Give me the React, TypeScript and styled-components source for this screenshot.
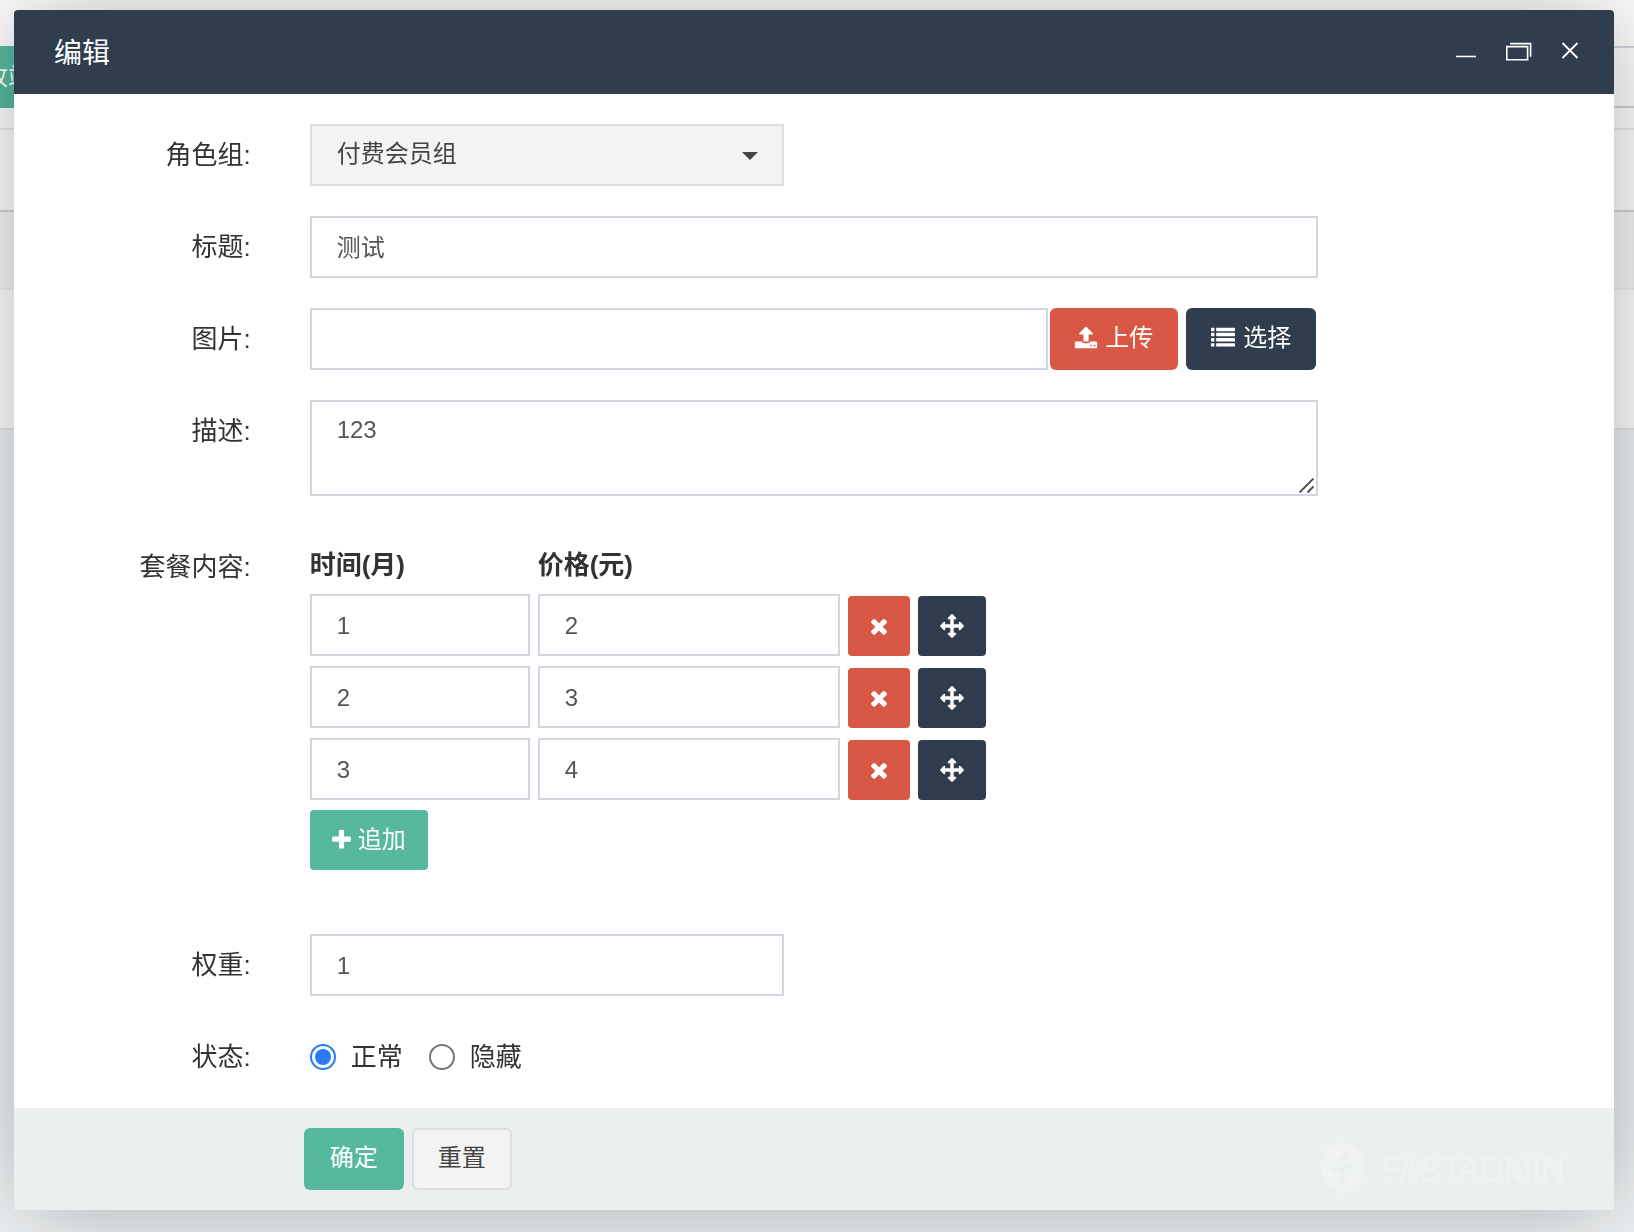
import React, { useState } from "react";
import styled, { createGlobalStyle } from "styled-components";

const sans = `"Liberation Sans", "Noto Sans CJK SC", sans-serif`;
const navy = "#303d4e";
const red = "#d85845";
const green = "#56b99e";
const line = "#d2d6de";

const GlobalStyle = createGlobalStyle`
  *, *::before, *::after { box-sizing: border-box; }
  body { margin: 0; background: #f1f4f6; font-family: ${sans}; color: #333; overflow: hidden; }
  button, input, select, textarea { font-family: inherit; }
`;

/* Page behind the dialog */

const Page = styled.div`
  min-height: 100vh;
  overflow: hidden;
`;

const ListPanel = styled.div`
  background: #fff;
  border-bottom: 2px solid #e6e9ea;
  padding-top: 46px;
`;

const ListToolbar = styled.div`
  display: flex;
  justify-content: space-between;
  margin: 0 -20px 20px -66px;
`;

const RecycleButton = styled.button`
  height: 62px;
  padding: 0 26px 6px;
  border: 0;
  background: ${green};
  color: #fff;
  font-size: 24px;
`;

const SearchInput = styled.input`
  width: 340px;
  height: 62px;
  border: 2px solid ${line};
`;

const ListHeading = styled.div`
  height: 84px;
  border-top: 2px solid #eee;
  border-bottom: 2px solid #d8d8d8;
`;

const ListRow = styled.div<{ $shaded?: boolean }>`
  height: ${(p) => (p.$shaded ? 78 : 138)}px;
  background: ${(p) => (p.$shaded ? "#f7f7f7" : "#fff")};
  border-bottom: ${(p) => (p.$shaded ? "2px solid #f0f0f0" : "0")};
`;

/* Dialog */

const Dialog = styled.section`
  position: fixed;
  inset: 10px 20px 22px 14px;
  display: flex;
  flex-direction: column;
  background: #fff;
  border-radius: 4px 4px 0 0;
  box-shadow: 2px 2px 100px rgba(0, 0, 0, 0.3);
`;

const TitleBar = styled.header`
  display: flex;
  align-items: center;
  justify-content: space-between;
  flex: none;
  height: 84px;
  padding: 0 28px 0 40px;
  border-radius: 4px 4px 0 0;
  background: ${navy};
  color: #fff;
`;

const Title = styled.h1`
  margin: 0;
  padding-top: 4px;
  font-size: 28px;
  font-weight: 400;
  line-height: 42px;
`;

const WindowControls = styled.div`
  display: flex;
  gap: 20px;
`;

const WindowButton = styled.button`
  display: flex;
  padding: 0;
  border: 0;
  background: none;
  color: #fff;
  cursor: pointer;
`;

const Form = styled.form`
  display: flex;
  flex-direction: column;
  flex: 1;
  min-height: 0;
`;

const Fields = styled.div`
  flex: 1;
  min-height: 0;
  padding-top: 30px;
  overflow: hidden;
`;

const Group = styled.div<{ $space?: number }>`
  display: grid;
  grid-template-columns: 2fr 4fr 4fr 2fr;
  margin-bottom: ${(p) => p.$space ?? 30}px;
`;

const Label = styled.label`
  padding-right: 30px;
  font-size: 26px;
  line-height: 62px;
  text-align: right;
  white-space: nowrap;
`;

const Cell = styled.div<{ $wide?: boolean }>`
  grid-column: span ${(p) => (p.$wide ? 2 : 1)};
  min-width: 0;
  padding: 0 ${(p) => (p.$wide ? 29 : 30)}px 0 29px;
`;

const TextInput = styled.input<{ $width?: number }>`
  display: block;
  width: ${(p) => (p.$width ? `${p.$width}px` : "100%")};
  min-width: 0;
  height: 62px;
  padding: 1px 25px 0;
  border: 2px solid ${line};
  border-radius: 0;
  background: #fff;
  color: #555;
  font-size: 24px;
  outline: none;
`;

const CjkInput = styled(TextInput)`
  padding-top: 0;
  padding-bottom: 4px;
`;

const TextArea = styled.textarea`
  display: block;
  width: 100%;
  height: 96px;
  padding: 11px 25px;
  border: 2px solid ${line};
  background: #fff;
  color: #555;
  font-size: 24px;
  line-height: 34px;
  outline: none;
  resize: none;
`;

const AreaWrap = styled.div`
  position: relative;
`;

const ResizeGrip = styled.svg`
  position: absolute;
  right: 4px;
  bottom: 3px;
`;

const SelectWrap = styled.div`
  position: relative;
`;

const Select = styled.select`
  display: block;
  width: 100%;
  height: 62px;
  padding: 0 60px 4px 25px;
  border: 2px solid #ddd;
  border-radius: 0;
  background: #f3f3f3;
  color: #444;
  font-size: 24px;
  appearance: none;
  outline: none;
`;

const Caret = styled.span`
  position: absolute;
  top: 28px;
  right: 26px;
  border: 8px solid transparent;
  border-top-color: #444;
  border-bottom: 0;
  pointer-events: none;
`;

const UploadRow = styled.div`
  display: flex;
  gap: 8px;
  padding-right: 2px;
`;

const UploadField = styled.div`
  display: flex;
  flex: 1;
  gap: 2px;
  min-width: 0;
`;

const Button = styled.button<{ $tone: string; $small?: boolean }>`
  display: inline-flex;
  align-items: center;
  justify-content: center;
  flex: none;
  gap: ${(p) => (p.$small ? 7 : 8)}px;
  height: ${(p) => (p.$small ? 60 : 62)}px;
  padding: 0 ${(p) => (p.$small ? 22 : 25)}px ${(p) => (p.$small ? 0 : 2)}px;
  border: 0;
  border-radius: ${(p) => (p.$small ? 4 : 6)}px;
  background: ${(p) => p.$tone};
  color: #fff;
  font-size: 24px;
  line-height: 34px;
  cursor: pointer;
`;

const FooterButton = styled(Button)<{ $outlined?: boolean }>`
  width: 100px;
  padding: 0 0 2px;
  border: ${(p) => (p.$outlined ? "2px solid #ddd" : "0")};
  color: ${(p) => (p.$outlined ? "#444" : "#fff")};
`;

const PlanRow = styled.div`
  display: flex;
  align-items: flex-end;
  gap: 8px;
  margin-bottom: 10px;
`;

const PlanHead = styled.div`
  display: flex;
  gap: 8px;
  font-size: 26px;
  font-weight: 700;
  line-height: 58px;
`;

const PlanHeading = styled.span<{ $width: number }>`
  width: ${(p) => p.$width}px;
`;

const RadioRow = styled.div`
  display: flex;
  align-items: center;
  gap: 26px;
  height: 62px;
`;

const RadioLabel = styled.label`
  display: flex;
  align-items: center;
  gap: 15px;
  font-size: 26px;
  line-height: 62px;
`;

const Radio = styled.input`
  width: 26px;
  height: 26px;
  margin: 0;
  padding: 3px;
  border: 2px solid #767676;
  border-radius: 50%;
  background: #fff;
  background-clip: content-box;
  appearance: none;

  &:checked {
    border-color: #2a7af8;
    background-color: #2a7af8;
  }
`;

const Footer = styled.footer`
  display: flex;
  align-items: center;
  justify-content: space-between;
  flex: none;
  height: 102px;
  background: #ebeff0;
`;

const FooterActions = styled.div`
  display: flex;
  gap: 8px;
  padding-left: calc(100% / 6 + 23px);
  flex: 1;
`;

const Brand = styled.div`
  display: flex;
  align-items: center;
  gap: 16px;
  padding: 20px 49px 0 0;
  color: #f1f2f4;
  font-family: Inter, sans-serif;
  font-size: 32px;
`;

const paths = {
  upload:
    "M1344 1472q0-26-19-45t-45-19-45 19-19 45 19 45 45 19 45-19 19-45zm256 0q0-26-19-45t-45-19-45 19-19 45 19 45 45 19 45-19 19-45zm128-224v320q0 40-28 68t-68 28h-1472q-40 0-68-28t-28-68v-320q0-40 28-68t68-28h427q21 56 70.5 92t110.5 36h256q61 0 110.5-36t70.5-92h427q40 0 68 28t28 68zm-325-648q-17 40-59 40h-256v448q0 26-19 45t-45 19h-256q-26 0-45-19t-19-45v-448h-256q-42 0-59-40-17-39 14-69l448-448q18-19 45-19t45 19l448 448q31 30 14 69z",
  times:
    "M1490 1322q0 40-28 68l-136 136q-28 28-68 28t-68-28l-294-294-294 294q-28 28-68 28t-68-28l-136-136q-28-28-28-68t28-68l294-294-294-294q-28-28-28-68t28-68l136-136q28-28 68-28t68 28l294 294 294-294q28-28 68-28t68 28l136 136q28 28 28 68t-28 68l-294 294 294 294q28 28 28 68z",
  arrows:
    "M1792 896q0 26-19 45l-256 256q-19 19-45 19t-45-19-19-45v-128h-384v384h128q26 0 45 19t19 45-19 45l-256 256q-19 19-45 19t-45-19l-256-256q-19-19-19-45t19-45 45-19h128v-384h-384v128q0 26-19 45t-45 19-45-19l-256-256q-19-19-19-45t19-45l256-256q19-19 45-19t45 19 19 45v128h384v-384h-128q-26 0-45-19t-19-45 19-45l256-256q19-19 45-19t45 19l256 256q19 19 19 45t-19 45-45 19h-128v384h384v-128q0-26 19-45t45-19 45 19l256 256q19 19 19 45z",
  plus: "M1600 736v192q0 40-28 68t-68 28h-416v416q0 40-28 68t-68 28h-192q-40 0-68-28t-28-68v-416h-416q-40 0-68-28t-28-68v-192q0-40 28-68t68-28h416v-416q0-40 28-68t68-28h192q40 0 68 28t28 68v416h416q40 0 68 28t28 68z",
};

/* Glyphs sit on a 1792-unit em; the view box trims the side bearings. */
function Icon({ name, width }: { name: keyof typeof paths; width: number }) {
  const span = (width / 24) * 1792;
  return (
    <svg width={width} height={24} viewBox={`${896 - span / 2} 0 ${span} 1792`} fill="currentColor" overflow="visible" aria-hidden="true">
      <path d={paths[name]} />
    </svg>
  );
}

function ListIcon() {
  return (
    <svg width="24" height="24" viewBox="0 0 1792 1792" fill="currentColor" aria-hidden="true">
      {[128, 512, 896, 1280].map((y) => (
        <g key={y}>
          <rect x="0" y={y} width="256" height="256" rx="32" />
          <rect x="384" y={y} width="1408" height="256" rx="32" />
        </g>
      ))}
    </svg>
  );
}

function PlanLine({ months, price }: { months: string; price: string }) {
  return (
    <PlanRow>
      <TextInput $width={220} defaultValue={months} aria-label="时间(月)" />
      <TextInput $width={302} defaultValue={price} aria-label="价格(元)" />
      <Button type="button" $tone={red} $small aria-label="删除">
        <Icon name="times" width={18} />
      </Button>
      <Button type="button" $tone={navy} $small aria-label="移动">
        <Icon name="arrows" width={24} />
      </Button>
    </PlanRow>
  );
}

export default function App() {
  const [status, setStatus] = useState("normal");
  const plans = [
    { months: "1", price: "2" },
    { months: "2", price: "3" },
    { months: "3", price: "4" },
  ];

  return (
    <>
      <GlobalStyle />
      <Page aria-hidden="true">
        <ListPanel>
          <ListToolbar>
            <RecycleButton type="button" tabIndex={-1}>回收站</RecycleButton>
            <SearchInput tabIndex={-1} />
          </ListToolbar>
          <ListHeading />
          <ListRow $shaded />
          <ListRow />
        </ListPanel>
      </Page>

      <Dialog role="dialog" aria-labelledby="dialog-title">
        <TitleBar>
          <Title id="dialog-title">编辑</Title>
          <WindowControls>
            <WindowButton type="button" aria-label="最小化">
              <svg width="32" height="32" viewBox="0 0 32 32" fill="none" stroke="currentColor" strokeWidth="1.6">
                <path d="M6 20.5h20" />
              </svg>
            </WindowButton>
            <WindowButton type="button" aria-label="还原">
              <svg width="32" height="32" viewBox="0 0 32 32" fill="none" stroke="currentColor" strokeWidth="1.6">
                <path d="M4.8 10.6h20.8v13.2H4.8zM8 7.6h20.6v13.2" />
              </svg>
            </WindowButton>
            <WindowButton type="button" aria-label="关闭">
              <svg width="32" height="32" viewBox="0 0 32 32" fill="none" stroke="currentColor" strokeWidth="1.8">
                <path d="M8.5 7l15 15M23.5 7l-15 15" />
              </svg>
            </WindowButton>
          </WindowControls>
        </TitleBar>

        <Form onSubmit={(e) => e.preventDefault()}>
          <Fields>
            <Group>
              <Label htmlFor="role">角色组:</Label>
              <Cell>
                <SelectWrap>
                  <Select id="role" defaultValue="paid">
                    <option value="paid">付费会员组</option>
                  </Select>
                  <Caret />
                </SelectWrap>
              </Cell>
            </Group>

            <Group>
              <Label htmlFor="title">标题:</Label>
              <Cell $wide>
                <CjkInput id="title" defaultValue="测试" />
              </Cell>
            </Group>

            <Group>
              <Label htmlFor="image">图片:</Label>
              <Cell $wide>
                <UploadRow>
                  <UploadField>
                    <TextInput id="image" />
                    <Button type="button" $tone={red}>
                      <Icon name="upload" width={22} />
                      上传
                    </Button>
                  </UploadField>
                  <Button type="button" $tone={navy}>
                    <ListIcon />
                    选择
                  </Button>
                </UploadRow>
              </Cell>
            </Group>

            <Group $space={40}>
              <Label htmlFor="description">描述:</Label>
              <Cell $wide>
                <AreaWrap>
                  <TextArea id="description" defaultValue="123" />
                  <ResizeGrip width="15" height="15" viewBox="0 0 15 15" stroke="#444" strokeWidth="1.8" aria-hidden="true">
                    <path d="M0.5 14.5l14-14M8.5 14.5l6-6" />
                  </ResizeGrip>
                </AreaWrap>
              </Cell>
            </Group>

            <Group $space={64}>
              <Label as="span">套餐内容:</Label>
              <Cell $wide>
                <PlanHead>
                  <PlanHeading $width={220}>时间(月)</PlanHeading>
                  <PlanHeading $width={302}>价格(元)</PlanHeading>
                </PlanHead>
                {plans.map((plan) => (
                  <PlanLine key={plan.months} {...plan} />
                ))}
                <Button type="button" $tone={green} $small>
                  <Icon name="plus" width={19} />
                  追加
                </Button>
              </Cell>
            </Group>

            <Group>
              <Label htmlFor="weight">权重:</Label>
              <Cell>
                <TextInput id="weight" defaultValue="1" />
              </Cell>
            </Group>

            <Group>
              <Label as="span">状态:</Label>
              <Cell $wide>
                <RadioRow>
                  <RadioLabel>
                    <Radio type="radio" name="status" checked={status === "normal"} onChange={() => setStatus("normal")} />
                    正常
                  </RadioLabel>
                  <RadioLabel>
                    <Radio type="radio" name="status" checked={status === "hidden"} onChange={() => setStatus("hidden")} />
                    隐藏
                  </RadioLabel>
                </RadioRow>
              </Cell>
            </Group>
          </Fields>

          <Footer>
            <FooterActions>
              <FooterButton type="submit" $tone={green}>确定</FooterButton>
              <FooterButton type="reset" $tone="#f3f3f3" $outlined>重置</FooterButton>
            </FooterActions>
            <Brand>
              <svg width="46" height="52" viewBox="0 0 46 52" fill="currentColor" aria-hidden="true">
                <path
                  fillRule="evenodd"
                  d="M23 0C10 0 1 10 1 23c0 9 4 15 10 20 4 3 8 5 12 9 4-4 8-6 12-9 6-5 10-11 10-20C45 10 36 0 23 0zM24 11c2-2 5-1 4 2l-2 8h6c2 0 3 2 2 4L23 41c-2 3-5 2-4-1l1-11h-6c-2 0-3-2-2-4z"
                />
              </svg>
              FASTADMIN
            </Brand>
          </Footer>
        </Form>
      </Dialog>
    </>
  );
}
